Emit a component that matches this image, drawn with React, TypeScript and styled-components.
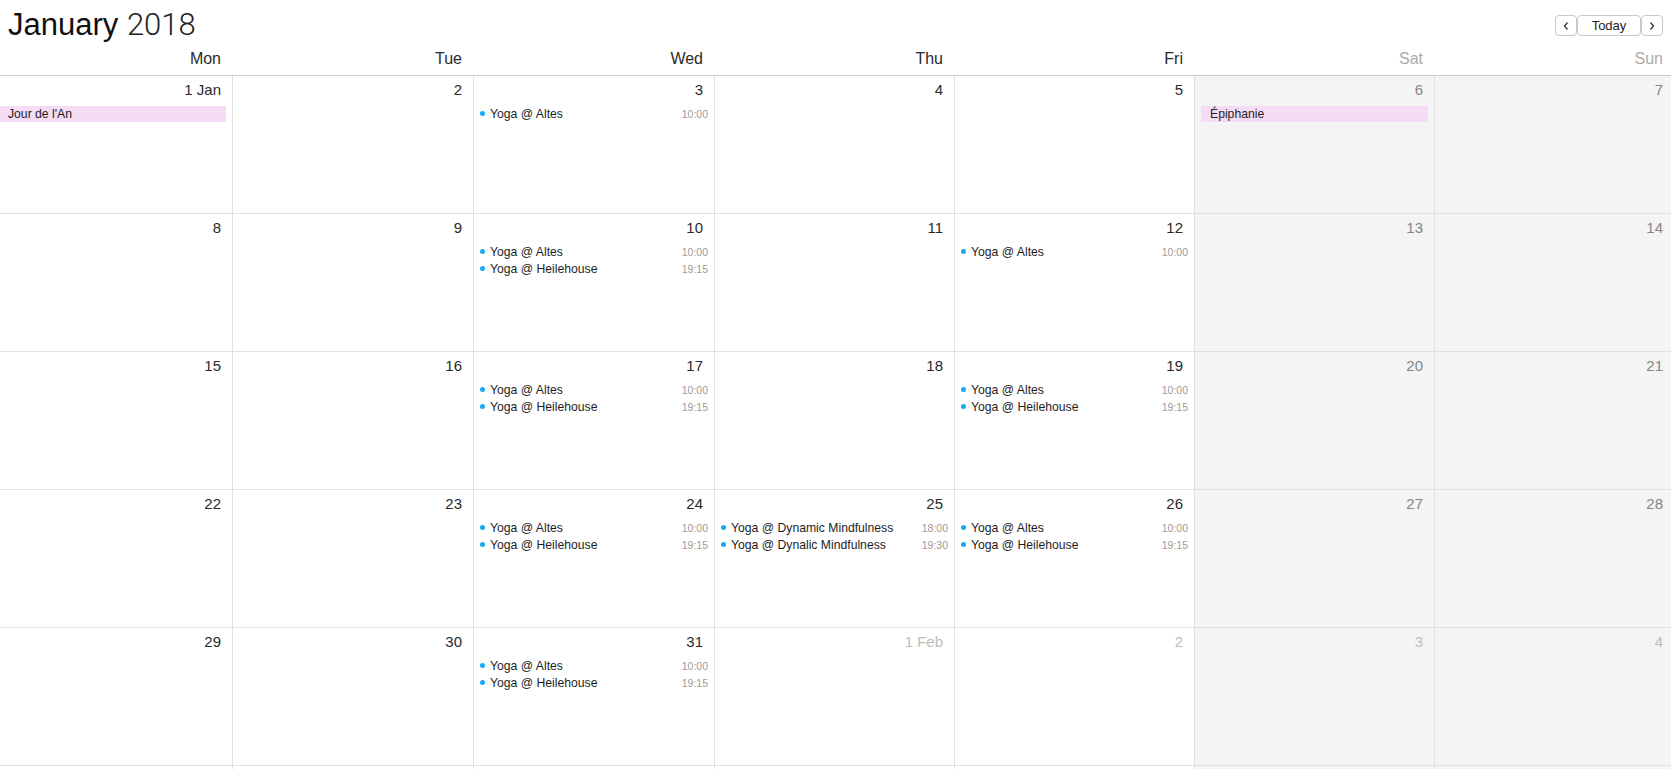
import React from 'react';
import styled, { createGlobalStyle } from 'styled-components';

const GlobalStyle = createGlobalStyle`
  html, body {
    margin: 0;
    padding: 0;
    background: #fff;
    overflow: hidden;
  }
  body {
    font-family: "Liberation Sans", Arial, sans-serif;
    color: #222;
  }
`;

const COLUMNS = '240px 241px 241px 240px 240px 240px 240px';

const Page = styled.div`
  width: 1671px;
  height: 769px;
  overflow: hidden;
`;

const Toolbar = styled.div`
  display: flex;
  justify-content: space-between;
  align-items: flex-start;
  height: 46px;
  padding: 0 8px;
  box-sizing: border-box;
`;

const Title = styled.h1`
  margin: 7px 0 0;
  font-size: 31px;
  line-height: 36px;
  font-weight: 400;
  color: #111;
`;

const Year = styled.span`
  font-family: Roboto, "Liberation Sans", sans-serif;
  font-weight: 300;
  color: #222;
`;

const NavGroup = styled.div`
  display: flex;
  margin-top: 15px;
`;

const NavButton = styled.button<{ $wide?: boolean }>`
  height: 21px;
  width: ${(p) => (p.$wide ? '64px' : '22px')};
  padding: 0;
  border: 1px solid #c8c8c8;
  border-radius: 4px;
  background: #fff;
  font-family: "Liberation Sans", Arial, sans-serif;
  font-size: 13px;
  color: #222;
  display: flex;
  align-items: center;
  justify-content: center;
  box-sizing: border-box;
`;

const WeekHeader = styled.div`
  display: grid;
  grid-template-columns: ${COLUMNS};
  margin-left: -7px;
  border-bottom: 1px solid #c9c9c9;
  width: 1690px;
`;

const DayName = styled.div<{ $weekend?: boolean }>`
  text-align: right;
  padding: 3px 12px 6px 0;
  font-size: 16px;
  line-height: 20px;
  color: ${(p) => (p.$weekend ? '#ababab' : '#2a2a2a')};
`;

const WeekRow = styled.div`
  display: grid;
  grid-template-columns: ${COLUMNS};
  margin-left: -7px;
`;

const Cell = styled.div<{ $weekend?: boolean }>`
  height: 138px;
  box-sizing: border-box;
  border-right: 1px solid #e0e0e0;
  border-bottom: 1px solid #e0e0e0;
  background: ${(p) => (p.$weekend ? '#f4f4f4' : '#fff')};
  padding: 4px 0 0;
  overflow: hidden;
`;

const DayNumber = styled.div<{ $tone: 'normal' | 'weekend' | 'faded' }>`
  text-align: right;
  padding-right: 11px;
  font-size: 15px;
  line-height: 20px;
  color: ${(p) => (p.$tone === 'normal' ? '#2a2a2a' : p.$tone === 'weekend' ? '#858585' : '#bdbdbd')};
`;

const EventList = styled.div`
  display: flex;
  flex-direction: column;
  padding-top: 5px;
`;

const Holiday = styled.div`
  margin: 1px 6px 0;
  height: 16px;
  line-height: 16px;
  background: #f5dcf4;
  padding-left: 9px;
  font-size: 12.2px;
  color: #222;
`;

const EventRow = styled.div`
  display: flex;
  align-items: center;
  height: 17px;
  padding: 0 6px;
  font-size: 12.2px;
`;

const Dot = styled.span`
  width: 5px;
  height: 5px;
  border-radius: 50%;
  background: #1aa8f0;
  margin-right: 5px;
  flex: none;
`;

const EventTitle = styled.span`
  flex: 1;
  color: #1e1e1e;
  white-space: nowrap;
`;

const EventTime = styled.span`
  font-size: 10.5px;
  color: #9a9a9a;
`;

type CalEvent = { title: string; time?: string; holiday?: boolean };

const altes: CalEvent = { title: 'Yoga @ Altes', time: '10:00' };
const heile: CalEvent = { title: 'Yoga @ Heilehouse', time: '19:15' };

const events: Record<string, CalEvent[]> = {
  '1-1': [{ title: "Jour de l'An", holiday: true }],
  '1-3': [altes],
  '1-6': [{ title: 'Épiphanie', holiday: true }],
  '1-10': [altes, heile],
  '1-12': [altes],
  '1-17': [altes, heile],
  '1-19': [altes, heile],
  '1-24': [altes, heile],
  '1-25': [
    { title: 'Yoga @ Dynamic Mindfulness', time: '18:00' },
    { title: 'Yoga @ Dynalic Mindfulness', time: '19:30' },
  ],
  '1-26': [altes, heile],
  '1-31': [altes, heile],
};

const dayNames = ['Mon', 'Tue', 'Wed', 'Thu', 'Fri', 'Sat', 'Sun'];
const monthShort = ['Jan', 'Feb'];

const buildWeeks = () => {
  const weeks: { month: number; day: number }[][] = [];
  let month = 1;
  let day = 1;
  for (let w = 0; w < 5; w++) {
    const week = [];
    for (let d = 0; d < 7; d++) {
      week.push({ month, day });
      day++;
      if (month === 1 && day > 31) {
        month = 2;
        day = 1;
      }
    }
    weeks.push(week);
  }
  return weeks;
};

const ChevronLeft = () => (
  <svg width="8" height="10" viewBox="0 0 8 10">
    <path d="M5.5 1.5 L2.5 5 L5.5 8.5" fill="none" stroke="#333" strokeWidth="1.3" />
  </svg>
);

const ChevronRight = () => (
  <svg width="8" height="10" viewBox="0 0 8 10">
    <path d="M2.5 1.5 L5.5 5 L2.5 8.5" fill="none" stroke="#333" strokeWidth="1.3" />
  </svg>
);

const App: React.FC = () => {
  const weeks = buildWeeks();
  return (
    <Page>
      <GlobalStyle />
      <Toolbar>
        <Title>
          January <Year>2018</Year>
        </Title>
        <NavGroup>
          <NavButton>
            <ChevronLeft />
          </NavButton>
          <NavButton $wide>Today</NavButton>
          <NavButton>
            <ChevronRight />
          </NavButton>
        </NavGroup>
      </Toolbar>
      <WeekHeader>
        {dayNames.map((n, i) => (
          <DayName key={n} $weekend={i >= 5}>
            {n}
          </DayName>
        ))}
      </WeekHeader>
      {weeks.map((week, wi) => (
        <WeekRow key={wi}>
          {week.map(({ month, day }, di) => {
            const weekend = di >= 5;
            const tone = month !== 1 ? 'faded' : weekend ? 'weekend' : 'normal';
            const label = day === 1 ? `1 ${monthShort[month - 1]}` : String(day);
            const list = events[`${month}-${day}`] || [];
            return (
              <Cell key={di} $weekend={weekend}>
                <DayNumber $tone={tone}>{label}</DayNumber>
                <EventList>
                  {list.map((ev, k) =>
                    ev.holiday ? (
                      <Holiday key={k}>{ev.title}</Holiday>
                    ) : (
                      <EventRow key={k}>
                        <Dot />
                        <EventTitle>{ev.title}</EventTitle>
                        <EventTime>{ev.time}</EventTime>
                      </EventRow>
                    )
                  )}
                </EventList>
              </Cell>
            );
          })}
        </WeekRow>
      ))}
      {/* next week's row, only its top edge shows */}
      <WeekRow>
        {dayNames.map((n, i) => (
          <Cell key={n} $weekend={i >= 5} />
        ))}
      </WeekRow>
    </Page>
  );
};

export default App;
